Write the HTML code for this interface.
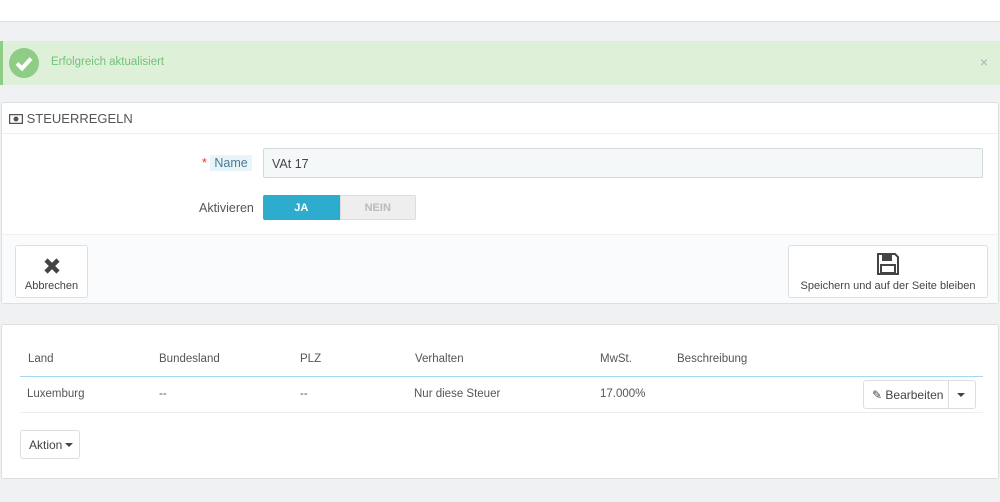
<!DOCTYPE html>
<html><head><style>
*{box-sizing:border-box;margin:0;padding:0}
body{width:1000px;height:502px;background:#eff1f2;font-family:"Liberation Sans",sans-serif;font-size:12px;color:#555;position:relative;overflow:hidden}
.top{position:absolute;left:0;top:0;width:1000px;height:22px;background:#fff;border-bottom:1px solid #dcdfe2}
.alert{position:absolute;left:0;top:41px;width:1000px;height:44px;background:#dff0d8;border-left:3px solid #8fcc86}
.alert .ic{position:absolute;left:6px;top:7px;width:30px;height:30px;border-radius:50%;background:#8fcc86}
.alert .t{position:absolute;left:48px;top:15px;color:#72c279;font-size:11.5px}
.alert .x{position:absolute;right:12px;top:13px;font-size:14px;color:#9bb}
.p1{position:absolute;left:1px;top:102px;width:998px;height:202px;background:#fff;border:1px solid #dcdfe2;border-radius:3px}
.hd{height:31px;border-bottom:1px solid #eef0f2;padding:8px 0 0 7px;font-size:13px;color:#555}
.lbl{position:absolute;font-size:12.5px;color:#555}
.inp{position:absolute;left:261px;top:45px;width:720px;height:30px;background:#f5f8f9;border:1px solid #d3d8db;border-radius:2px;padding:8px 8px;font-size:12.5px;color:#444}
.sw{position:absolute;left:261px;top:92px;width:153px;height:25px;border-radius:2px;overflow:hidden;display:flex;font-size:11px;font-weight:bold}
.sw div{width:50%;text-align:center;line-height:25px}
.ft{position:absolute;left:0;top:131px;width:996px;height:69px;background:#fafbfc;border-top:1px solid #eef0f2}
.btn{position:absolute;background:#fff;border:1px solid #dcdfe2;border-radius:3px;text-align:center;font-size:11px;color:#444}
.p2{position:absolute;left:1px;top:324px;width:998px;height:155px;background:#fff;border:1px solid #dcdfe2;border-radius:3px}
.th{position:absolute;top:28px;font-size:11.5px;color:#555}
.td{position:absolute;top:63px;font-size:11.5px;color:#555}
</style></head><body>
<div class="top"></div>
<div class="alert"><div class="ic"><svg width="30" height="30" viewBox="0 0 30 30"><path d="M8 15.5l5 5 9-10" stroke="#fff" stroke-width="4" fill="none"/></svg></div><div class="t">Erfolgreich aktualisiert</div><div class="x">×</div></div>
<div class="p1">
<div class="hd"><svg width="14" height="10" viewBox="0 0 14 10" style="vertical-align:-1px"><rect x="0.5" y="0.5" width="13" height="9" fill="none" stroke="#555" stroke-width="1.5"/><circle cx="7" cy="5" r="2.5" fill="#555"/></svg> STEUERREGELN</div>
<div class="lbl" style="left:200px;top:53px"><span style="color:#e33">*</span> <span style="background:#e8f4fa;padding:1px 4px;color:#4a7a94">Name</span></div>
<div class="inp">VAt 17</div>
<div class="lbl" style="left:197px;top:98px">Aktivieren</div>
<div class="sw"><div style="background:#2eacce;color:#fff;line-height:27px">JA</div><div style="background:#eeeeee;color:#bbb;border:1px solid #ddd">NEIN</div></div>
<div class="ft">
<div class="btn" style="left:13px;top:10px;width:73px;height:53px"><svg width="20" height="20" viewBox="0 0 20 20" style="margin-top:10px"><path d="M4 4L16 16M16 4L4 16" stroke="#444" stroke-width="4.5"/></svg><div style="margin-top:1px">Abbrechen</div></div>
<div class="btn" style="left:786px;top:10px;width:200px;height:53px"><svg width="24" height="24" viewBox="0 0 24 24" style="margin-top:6px"><path d="M2 2h17l3 3v17H2z" fill="none" stroke="#444" stroke-width="2"/><rect x="6" y="3" width="10" height="6" fill="#444"/><rect x="5" y="13" width="14" height="8" fill="none" stroke="#444" stroke-width="2"/></svg><div style="margin-top:1px">Speichern und auf der Seite bleiben</div></div>
</div>
</div>
<div class="p2">
<div class="th" style="left:26px">Land</div><div class="th" style="left:157px">Bundesland</div><div class="th" style="left:298px">PLZ</div><div class="th" style="left:413px">Verhalten</div><div class="th" style="left:598px">MwSt.</div><div class="th" style="left:675px">Beschreibung</div>
<div style="position:absolute;left:18px;top:51px;width:963px;height:1px;background:#a6d7ef"></div>
<div class="td" style="left:25px">Luxemburg</div><div class="td" style="left:157px">--</div><div class="td" style="left:298px">--</div><div class="td" style="left:412px">Nur diese Steuer</div><div class="td" style="left:598px">17.000%</div>
<div class="btn" style="left:861px;top:55px;width:113px;height:29px;text-align:left"><span style="position:absolute;left:8px;top:7px;font-size:12px">✎ Bearbeiten</span><div style="position:absolute;left:84px;top:0;width:1px;height:27px;background:#dcdfe2"></div><span style="position:absolute;left:93px;top:12px;border:4px solid transparent;border-top:4px solid #444"></span></div>
<div style="position:absolute;left:18px;top:87px;width:963px;height:1px;background:#eceeef"></div>
<div class="btn" style="left:18px;top:105px;width:60px;height:29px;text-align:left;font-size:12px"><span style="position:absolute;left:8px;top:7px">Aktion</span><span style="position:absolute;left:44px;top:12px;border:4px solid transparent;border-top:4px solid #444"></span></div>
</div>
</body></html>
